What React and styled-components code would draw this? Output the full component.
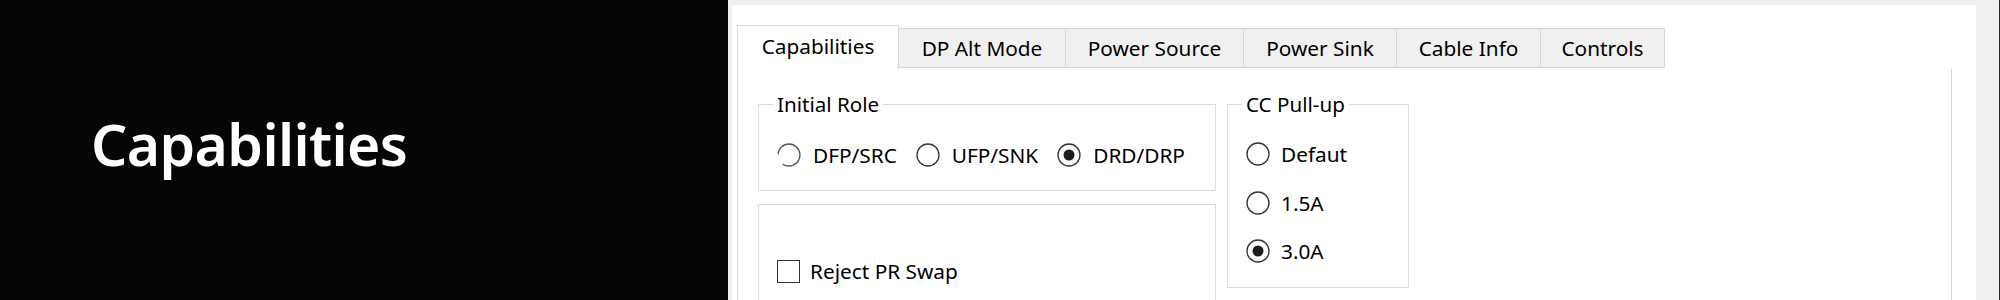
import React from "react";
import styled, { createGlobalStyle } from "styled-components";

const tabs = [
  { label: "Capabilities", width: 162 },
  { label: "DP Alt Mode", width: 168 },
  { label: "Power Source", width: 179 },
  { label: "Power Sink", width: 154 },
  { label: "Cable Info", width: 145 },
  { label: "Controls", width: 125 },
];

const roles = [
  { label: "DFP/SRC", fading: true },
  { label: "UFP/SNK" },
  { label: "DRD/DRP", checked: true },
];

const pullUps = [{ label: "Defaut" }, { label: "1.5A" }, { label: "3.0A", checked: true }];

const RadioIcon = ({ checked, fading }) => (
  <svg width="24" height="24" viewBox="0 0 24 24">
    <circle
      cx="12"
      cy="12"
      r="11"
      fill="none"
      stroke={fading ? "#4d5864" : "#333"}
      strokeWidth="1.3"
      strokeDasharray={fading ? "58 11" : undefined}
      strokeDashoffset={fading ? "-35" : undefined}
    />
    {checked && <circle cx="12" cy="12" r="5.5" fill="#1c1c1c" />}
  </svg>
);

const App = () => {
  return (
    <>
      <GlobalStyle />
      <Screen>
        <TitlePanel>
          <Title>Capabilities</Title>
        </TitlePanel>
        <AppFrame>
          <Window>
            <TabStrip>
              {tabs.map((t, i) => (
                <Tab key={t.label} $width={t.width} $active={i === 0}>
                  {t.label}
                </Tab>
              ))}
            </TabStrip>
            <TabPage>
              <LeftColumn>
                <GroupBox $width={458} $height={87} $padTop={38}>
                  <Caption>Initial Role</Caption>
                  <RadioRow>
                    {roles.map((r) => (
                      <Option key={r.label}>
                        <RadioIcon checked={r.checked} fading={r.fading} />
                        <OptionLabel>{r.label}</OptionLabel>
                      </Option>
                    ))}
                  </RadioRow>
                </GroupBox>
                <GroupBox $width={458} $height={130} $padTop={54}>
                  <Option>
                    <CheckBox />
                    <OptionLabel $gap={10}>Reject PR Swap</OptionLabel>
                  </Option>
                </GroupBox>
              </LeftColumn>
              <GroupBox $width={182} $height={184} $padTop={37}>
                <Caption>CC Pull-up</Caption>
                <RadioColumn>
                  {pullUps.map((p) => (
                    <Option key={p.label}>
                      <RadioIcon checked={p.checked} />
                      <OptionLabel $gap={11}>{p.label}</OptionLabel>
                    </Option>
                  ))}
                </RadioColumn>
              </GroupBox>
            </TabPage>
          </Window>
        </AppFrame>
      </Screen>
    </>
  );
};

const GlobalStyle = createGlobalStyle`
  html, body {
    margin: 0;
    padding: 0;
  }
  body {
    width: 2000px;
    height: 300px;
    overflow: hidden;
    background: #f0f0f0;
    font-family: "Noto Sans", "Liberation Sans", sans-serif;
    color: #000;
  }
`;

const Screen = styled.div`
  display: flex;
  width: 2000px;
  height: 300px;
  overflow: hidden;
`;

const TitlePanel = styled.div`
  flex: none;
  width: 728px;
  box-sizing: border-box;
  background: #050507;
  display: flex;
  align-items: center;
  padding: 0 0 12px 91px;
`;

const Title = styled.h1`
  margin: 0;
  color: #fff;
  font-family: "Noto Sans", "Open Sans", sans-serif;
  font-weight: 600;
  font-size: 57px;
  line-height: 1;
  letter-spacing: -0.6px;
`;

const AppFrame = styled.div`
  flex: 1;
  display: flex;
  background: #f0f0f0;
  padding: 5px 23px 0 4px;
  border-right: 1px solid #2b2b2b;
`;

const Window = styled.div`
  flex: 1;
  display: flex;
  flex-direction: column;
  background: #fff;
  padding: 20px 24px 0 5px;
`;

const TabStrip = styled.div`
  display: flex;
  align-items: flex-end;
  height: 44px;
  padding-left: 1px;
`;

const Tab = styled.div`
  position: relative;
  z-index: ${(p) => (p.$active ? 1 : 0)};
  box-sizing: border-box;
  width: ${(p) => p.$width}px;
  height: ${(p) => (p.$active ? 44 : 40)}px;
  margin-left: -1px;
  margin-bottom: ${(p) => (p.$active ? 0 : 1)}px;
  display: flex;
  align-items: center;
  justify-content: center;
  padding-bottom: ${(p) => (p.$active ? 4 : 0)}px;
  background: ${(p) => (p.$active ? "#fff" : "#f0f0f0")};
  border: 1px solid #d9d9d9;
  border-bottom: ${(p) => (p.$active ? "none" : "1px solid #d9d9d9")};
  font-size: 20.8px;
  white-space: nowrap;
`;

const TabPage = styled.div`
  flex: 1;
  display: flex;
  align-items: flex-start;
  gap: 11px;
  border-left: 1px solid #d9d9d9;
  border-right: 1px solid #d9d9d9;
  padding: 35px 0 0 20px;
`;

const LeftColumn = styled.div`
  display: flex;
  flex-direction: column;
  gap: 13px;
`;

const GroupBox = styled.div`
  position: relative;
  box-sizing: border-box;
  width: ${(p) => p.$width}px;
  height: ${(p) => p.$height}px;
  border: 1px solid #dcdcdc;
  padding: ${(p) => p.$padTop}px 0 0 18px;
`;

const Caption = styled.span`
  position: absolute;
  top: -14px;
  left: 14px;
  padding: 0 4px;
  background: #fff;
  font-size: 20.6px;
  line-height: 26px;
`;

const RadioRow = styled.div`
  display: flex;
  gap: 19px;
`;

const RadioColumn = styled.div`
  display: flex;
  flex-direction: column;
  gap: 24.5px;
`;

const Option = styled.label`
  display: flex;
  align-items: center;
  height: 24px;
`;

const OptionLabel = styled.span`
  margin-left: ${(p) => p.$gap ?? 12}px;
  font-size: 20.8px;
  line-height: 24px;
  white-space: nowrap;
`;

const CheckBox = styled.span`
  box-sizing: border-box;
  width: 23px;
  height: 23px;
  border: 1px solid #333;
`;

export default App;
